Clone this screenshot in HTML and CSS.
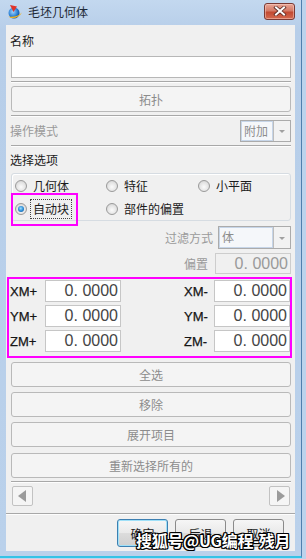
FILE: index.html
```html
<!doctype html>
<html lang="zh-CN">
 <head>
  <meta charset="UTF-8">
  <meta name="viewport" content="width=device-width, initial-scale=1.0">
  <title>毛坯几何体</title>
  <link rel="stylesheet" href="styles.css">
 </head>
 <body>
  <div class="frame">
   <div class="titlebar">
    <svg class="app-icon" width="16" height="16" viewBox="0 0 16 16">
     <defs>
      <radialGradient id="ball" cx="0.4" cy="0.4" r="0.7">
       <stop offset="0" stop-color="#9fd4ff"/>
       <stop offset="0.6" stop-color="#2a7fd4"/>
       <stop offset="1" stop-color="#0c3f86"/>
      </radialGradient>
     </defs>
     <circle cx="7" cy="9" r="5.5" fill="url(#ball)"/>
     <path d="M1.5 12.5 C5 15.5 12 14 15 8.5 C12 12 6 13.5 1.5 12.5 Z" fill="#f2b31c"/>
     <path d="M3 1 L10 2.5 L6.5 8 Z" fill="#e0332a"/>
    </svg>
    <span class="title">毛坯几何体</span>
    <div class="close-btn">
     <svg width="14" height="10" viewBox="0 0 14 10">
      <path d="M3 1.5 L11 8.5 M11 1.5 L3 8.5" stroke="#5a2a24" stroke-width="3.6" stroke-linecap="square"/>
      <path d="M3 1.5 L11 8.5 M11 1.5 L3 8.5" stroke="#fff" stroke-width="2" stroke-linecap="square"/>
     </svg>
    </div>
   </div>

   <div class="client">
    <div class="label name-label">名称</div>
    <div class="text-input"></div>
    <div class="sep"></div>
    <div class="btn btn-topo">拓扑</div>
    <div class="sep"></div>

    <div class="mode-row">
     <span class="label disabled">操作模式</span>
     <div class="combo combo-mode">
      <span class="combo-text">附加</span>
      <span class="combo-arrow"></span>
     </div>
    </div>
    <div class="sep"></div>

    <div class="label section-label">选择选项</div>
    <div class="group">
     <div class="radio-grid">
      <label class="radio"><span class="dot"></span>几何体</label>
      <label class="radio"><span class="dot"></span>特征</label>
      <label class="radio"><span class="dot"></span>小平面</label>
      <label class="radio"><span class="dot checked"></span><span class="focus">自动块</span></label>
      <label class="radio"><span class="dot"></span>部件的偏置</label>
     </div>
     <div class="mark mark-radio"></div>
    </div>

    <div class="field-row filter-row">
     <span class="label disabled">过滤方式</span>
     <div class="combo combo-filter">
      <span class="combo-text">体</span>
      <span class="combo-arrow"></span>
     </div>
    </div>
    <div class="field-row offset-row">
     <span class="label disabled">偏置</span>
     <div class="num-input disabled">0. 0000</div>
    </div>

    <div class="limits">
     <span class="axis">XM+</span><div class="num-input">0. 0000</div><span></span>
     <span class="axis">XM-</span><div class="num-input">0. 0000</div>
     <span class="axis">YM+</span><div class="num-input">0. 0000</div><span></span>
     <span class="axis">YM-</span><div class="num-input">0. 0000</div>
     <span class="axis">ZM+</span><div class="num-input">0. 0000</div><span></span>
     <span class="axis">ZM-</span><div class="num-input">0. 0000</div>
    </div>

    <div class="btn-stack">
     <div class="btn">全选</div>
     <div class="btn">移除</div>
     <div class="btn">展开项目</div>
     <div class="btn btn-last">重新选择所有的</div>
    </div>
    <div class="sep"></div>

    <div class="scroll-row">
     <div class="arrow-btn"><span class="tri tri-left"></span></div>
     <div class="arrow-btn"><span class="tri tri-right"></span></div>
    </div>
    <div class="sep sep-wide"></div>

    <div class="actions">
     <div class="act-btn default">确定</div>
     <div class="act-btn">后退</div>
     <div class="act-btn">取消</div>
    </div>

    <div class="watermark">搜狐号@UG编程-残月</div>
   </div>
  </div>
 </body>
</html>
```

FILE: styles.css
```css
* {
  margin: 0;
  padding: 0;
  box-sizing: border-box;
}

body {
  width: 306px;
  height: 559px;
  overflow: hidden;
  background: #bcd3ec;
  font-family: "Noto Sans CJK SC", "Liberation Sans", sans-serif;
  font-size: 12px;
  color: #1b1b1b;
}

.frame {
  width: 302px;
  height: 558px;
  background: linear-gradient(180deg, #c3d8ef 0, #b7cee9 30px, #bad1eb 100%);
  border-right: 1px solid #4f7fae;
  border-bottom: 2px solid #35c3e6;
  display: flex;
  flex-direction: column;
}

.titlebar {
  height: 25px;
  display: flex;
  align-items: center;
  padding-left: 7px;
  position: relative;
}

.app-icon {
  margin-top: -2px;
}

.title {
  margin-left: 5px;
  font-size: 12px;
  color: #1e2a38;
  line-height: 1;
  margin-top: -1px;
}

.close-btn {
  margin-left: auto;
  margin-right: 6px;
  margin-top: -3px;
  width: 31px;
  height: 17px;
  border: 1px solid #7a3a34;
  border-radius: 3px;
  background: linear-gradient(180deg, #e9a696 0, #d47a66 45%, #c24a32 55%, #d46a50 100%);
  box-shadow: inset 0 0 0 1px rgba(255, 220, 210, 0.45);
  display: flex;
  align-items: center;
  justify-content: center;
}

.client {
  position: relative;
  width: 289px;
  height: 526px;
  margin-left: 6px;
  background: #f0f0f0;
  padding: 0 4px 0 5px;
  display: flex;
  flex-direction: column;
}

.label {
  font-size: 12px;
  line-height: 16px;
  color: #1b1b1b;
  white-space: nowrap;
}

.label.disabled {
  color: #9a9a9a;
}

.name-label {
  margin-top: 8px;
  margin-left: -1px;
}

.text-input {
  margin-top: 7px;
  height: 22px;
  background: #fff;
  border: 1px solid #b7b7b7;
}

.sep {
  margin-top: 3px;
  height: 2px;
  border-top: 1px solid #a8a8a8;
  border-bottom: 1px solid #fdfdfd;
}

.btn {
  height: 25px;
  border: 1px solid #b9b9b9;
  border-radius: 3px;
  background: #f4f4f4;
  color: #8c8c8c;
  display: flex;
  align-items: center;
  justify-content: center;
  font-size: 12px;
}

.btn-topo {
  margin-top: 3px;
  height: 26px;
}

.mode-row {
  margin-top: 3px;
  height: 22px;
  display: flex;
  align-items: center;
  justify-content: space-between;
  padding-left: 0;
  margin-left: -1px;
}

.combo {
  display: flex;
  border: 1px solid #ababab;
  background: #f2f2f2;
}

.combo-text {
  flex: 1;
  border: 1px solid #c6d5e8;
  background: #f5f7fa;
  color: #8d8d8d;
  font-size: 12px;
  line-height: 18px;
  padding-left: 2px;
}

.combo-arrow {
  width: 17px;
  border-left: 1px solid #bdbdbd;
  position: relative;
}

.combo-arrow::after {
  content: "";
  position: absolute;
  left: 5px;
  top: 50%;
  margin-top: -1px;
  border-left: 3px solid transparent;
  border-right: 3px solid transparent;
  border-top: 3px solid #a0a0a0;
}

.combo-mode {
  width: 51px;
  height: 22px;
}

.section-label {
  margin-top: 5px;
  margin-left: -1px;
}

.group {
  position: relative;
  margin-top: 5px;
  height: 48px;
  border: 1px solid #d6dce2;
  border-radius: 3px;
  box-shadow: inset 1px 1px 0 #fff;
  padding-left: 3px;
}

.radio-grid {
  display: grid;
  grid-template-columns: 91px 92px 1fr;
  grid-auto-rows: 23px;
}

.radio {
  display: flex;
  align-items: center;
  gap: 6px;
  font-size: 12px;
  color: #1b1b1b;
  white-space: nowrap;
}

.dot {
  width: 12px;
  height: 12px;
  border-radius: 50%;
  border: 1px solid #9a9a9a;
  background: radial-gradient(circle at 50% 60%, #fbfbfb 0, #e4e4e4 55%, #c9c9c9 100%);
  flex: none;
  position: relative;
}

.dot.checked::after {
  content: "";
  position: absolute;
  left: 2px;
  top: 2px;
  width: 6px;
  height: 6px;
  border-radius: 50%;
  background: radial-gradient(circle at 45% 40%, #9ee0ff 0, #2d8ed8 50%, #0c4c8c 100%);
}

.focus {
  border: 1px dotted #444;
  padding: 0 2px;
  line-height: 18px;
  margin-left: -3px;
}

.mark {
  position: absolute;
  border: 2px solid #f0f;
}

.mark-radio {
  left: -1px;
  top: 19px;
  width: 67px;
  height: 33px;
}

.field-row {
  display: flex;
  justify-content: flex-end;
  align-items: center;
}

.filter-row {
  margin-top: 5px;
  height: 23px;
  gap: 5px;
}

.combo-filter {
  width: 73px;
  height: 23px;
}

.offset-row {
  margin-top: 4px;
  height: 21px;
  gap: 7px;
}

.num-input {
  height: 22px;
  width: 76px;
  background: #fff;
  border: 1px solid #c6c6c6;
  font-family: "Liberation Sans", sans-serif;
  font-size: 16px;
  line-height: 20px;
  color: #454545;
  text-align: right;
  padding-right: 2px;
  white-space: pre;
}

.num-input.disabled {
  height: 21px;
  background: #f0f0f0;
  border-color: #cdcdcd;
  color: #9a9a9a;
  line-height: 19px;
}

.limits {
  margin-top: 3px;
  margin-left: -4px;
  margin-right: -1px;
  border: 2px solid #f0f;
  padding: 1px 0 4px 0;
  display: grid;
  grid-template-columns: 36px 76px 1fr 31px 76px;
  grid-auto-rows: 22px;
  row-gap: 3px;
}

.axis {
  font-family: "Liberation Sans", sans-serif;
  font-size: 13px;
  color: #151515;
  display: flex;
  align-items: center;
  padding-left: 1px;
  -webkit-text-stroke: 0.25px #151515;
}

.btn-stack {
  margin-top: 4px;
  display: flex;
  flex-direction: column;
  gap: 5px;
}

.btn-last {
  margin-top: 1px;
}

.scroll-row {
  margin-top: 3px;
  height: 20px;
  display: flex;
  justify-content: space-between;
  padding: 0 0 0 1px;
  margin-right: 1px;
}

.arrow-btn {
  width: 21px;
  height: 20px;
  border: 1px solid #c2c2c2;
  border-radius: 2px;
  background: #f5f5f5;
  display: flex;
  align-items: center;
  justify-content: center;
}

.tri {
  width: 0;
  height: 0;
  border-top: 6px solid transparent;
  border-bottom: 6px solid transparent;
}

.tri-left {
  border-right: 8px solid #9b9b9b;
  margin-left: -2px;
}

.tri-right {
  border-left: 8px solid #9b9b9b;
  margin-right: -2px;
}

.sep-wide {
  margin-top: 7px;
  margin-left: -5px;
  margin-right: -4px;
}

.actions {
  margin-top: 4px;
  display: flex;
  justify-content: flex-end;
  gap: 7px;
  padding-right: 7px;
}

.act-btn {
  width: 51px;
  height: 28px;
  border: 1px solid #8a8a8a;
  border-radius: 3px;
  background: linear-gradient(180deg, #f6f6f6 0, #e9e9e9 50%, #dcdcdc 51%, #cfcfcf 100%);
  display: flex;
  align-items: center;
  justify-content: center;
  font-size: 12px;
  color: #1b1b1b;
}

.act-btn.default {
  border-color: #3c7fb1;
  box-shadow: inset 0 0 0 1px #9fe0f8;
}

.watermark {
  position: absolute;
  left: 130px;
  top: 503px;
  font-size: 16px;
  font-weight: bold;
  color: #fff;
  white-space: nowrap;
  letter-spacing: -0.3px;
  text-shadow: 1px 0 0 #000, -1px 0 0 #000, 0 1px 0 #000, 0 -1px 0 #000, 1px 1px 0 #000, -1px -1px 0 #000, 1px -1px 0 #000, -1px 1px 0 #000;
}
```
